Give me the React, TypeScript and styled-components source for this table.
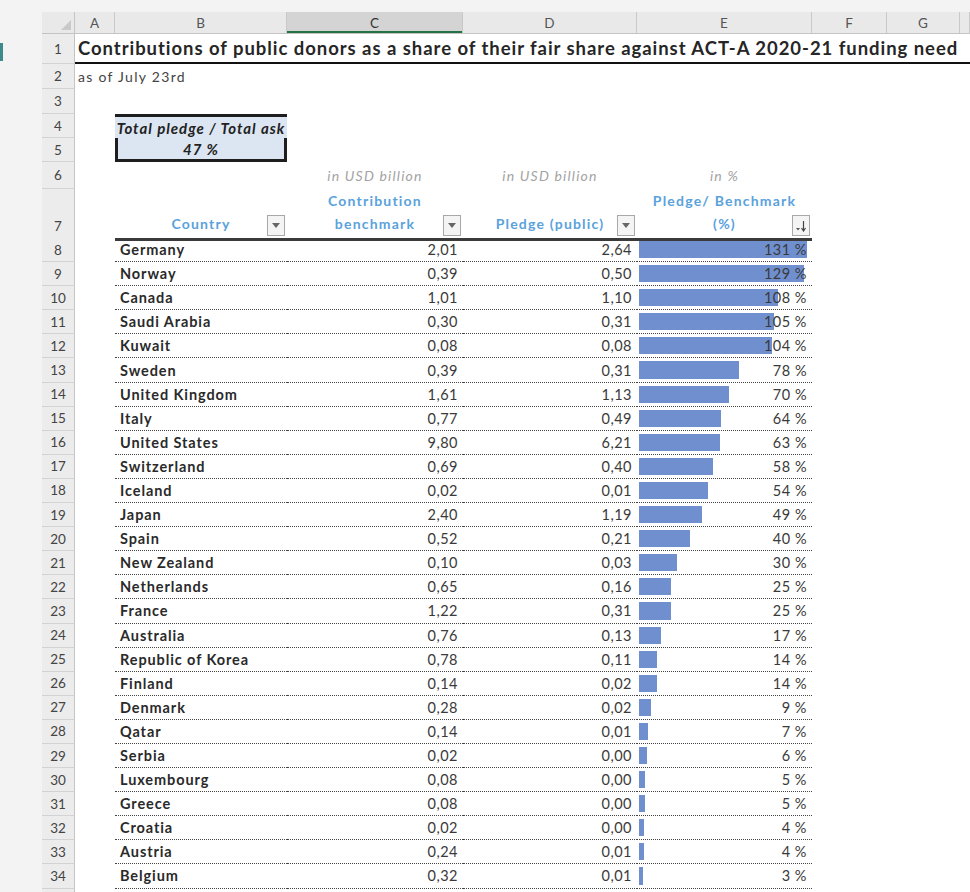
import React from "react";
import styled, { createGlobalStyle } from "styled-components";

const GlobalStyle = createGlobalStyle`
  html, body {
    margin: 0;
    padding: 0;
    background: #f3f3f3;
    overflow: hidden;
  }
  body {
    font-family: Lato, "Liberation Sans", sans-serif;
  }
`;

const COLS = "33px 40px 172px 176px 174px 175px 75px 73px 1fr";

const Window = styled.div`
  display: flex;
  width: 970px;
  height: 892px;
  overflow: hidden;
  background: #f3f3f3;
`;

const SideStrip = styled.div`
  width: 42px;
  flex-shrink: 0;
  padding-top: 43px;
`;

const SelectionMark = styled.div`
  width: 3px;
  height: 18px;
  background: #3d8b8a;
`;

const Sheet = styled.div`
  flex: 1;
  display: flex;
  flex-direction: column;
  padding-top: 12px;
`;

const ColumnBar = styled.div`
  display: grid;
  grid-template-columns: ${COLS};
  height: 21px;
  flex-shrink: 0;
  background: #e9e9e9;
  border-bottom: 1px solid #c4c4c4;
`;

const Corner = styled.div`
  position: relative;
  border-right: 1px solid #c4c4c4;
  &::after {
    content: "";
    position: absolute;
    right: 3px;
    bottom: 3px;
    border-left: 10px solid transparent;
    border-bottom: 10px solid #c9c9c9;
  }
`;

const ColLetter = styled.div<{ $active?: boolean }>`
  display: flex;
  align-items: center;
  justify-content: center;
  font-size: 13.5px;
  color: ${(p) => (p.$active ? "#333" : "#555")};
  background: ${(p) => (p.$active ? "#d4d4d4" : "transparent")};
  border-right: 1px solid #c9c9c9;
  box-shadow: ${(p) => (p.$active ? "inset 0 -2px 0 #217346" : "none")};
`;

const Row = styled.div<{ $h: number }>`
  display: grid;
  grid-template-columns: ${COLS};
  height: ${(p) => p.$h}px;
  flex-shrink: 0;
  background: #fff;
`;

const RowNum = styled.div<{ $bottom?: boolean }>`
  display: flex;
  justify-content: center;
  align-items: ${(p) => (p.$bottom ? "flex-end" : "center")};
  padding-bottom: ${(p) => (p.$bottom ? "6px" : "0")};
  background: #ececec;
  border-right: 1px solid #c4c4c4;
  border-bottom: 1px solid #d3d3d3;
  font-size: 13.5px;
  color: #444;
`;

const TitleCell = styled.div`
  grid-column: 2 / -1;
  display: flex;
  align-items: center;
  padding-left: 3px;
  border-bottom: 2px solid #111;
  font-size: 18.5px;
  letter-spacing: 0.95px;
  font-weight: 700;
  color: #262626;
  white-space: nowrap;
`;

const NoteCell = styled.div`
  grid-column: 2 / -1;
  display: flex;
  align-items: center;
  padding-left: 3px;
  font-size: 14px;
  letter-spacing: 1.3px;
  color: #444;
`;

const BoxCell = styled.div<{ $top?: boolean }>`
  grid-column: 3;
  display: flex;
  align-items: center;
  justify-content: center;
  background: #dce6f2;
  font-size: 15px;
  letter-spacing: 1px;
  font-weight: 700;
  font-style: italic;
  color: #222;
  white-space: nowrap;
  border-top: ${(p) => (p.$top ? "3px solid #1e1e1e" : "none")};
  border-left: ${(p) => (p.$top ? "none" : "3px solid #1e1e1e")};
  border-right: ${(p) => (p.$top ? "none" : "3px solid #1e1e1e")};
  border-bottom: ${(p) => (p.$top ? "none" : "3px solid #1e1e1e")};
`;

const UnitLabel = styled.div<{ $col: number }>`
  grid-column: ${(p) => p.$col};
  display: flex;
  align-items: center;
  justify-content: center;
  font-size: 14px;
  letter-spacing: 1.2px;
  font-style: italic;
  color: #a3a3a3;
`;

const HeadCell = styled.div<{ $col: number }>`
  grid-column: ${(p) => p.$col};
  position: relative;
  display: flex;
  align-items: flex-end;
  justify-content: center;
  padding-bottom: 3px;
  border-bottom: 3px solid #3a3a3a;
  font-size: 14px;
  letter-spacing: 1.2px;
  font-weight: 700;
  line-height: 23px;
  color: #5aa2dc;
  text-align: center;
`;

const FilterButton = styled.span`
  position: absolute;
  right: 2px;
  bottom: 2px;
  width: 18px;
  height: 21px;
  box-sizing: border-box;
  border: 1px solid #a8a8a8;
  background: #f4f4f4;
  display: flex;
  align-items: center;
  justify-content: center;
`;

const NameCell = styled.div`
  grid-column: 3;
  display: flex;
  align-items: center;
  padding-left: 5px;
  border-bottom: 1px dotted #444;
  font-size: 14.5px;
  letter-spacing: 0.9px;
  font-weight: 700;
  color: #2a2a2a;
  white-space: nowrap;
`;

const NumCell = styled.div<{ $col: number }>`
  grid-column: ${(p) => p.$col};
  position: relative;
  display: flex;
  align-items: center;
  justify-content: flex-end;
  padding-right: 5px;
  border-bottom: 1px dotted #444;
  font-size: 14.5px;
  letter-spacing: 0.5px;
  color: #3a3a3a;
`;

const Bar = styled.div`
  position: absolute;
  left: 2px;
  top: 3px;
  bottom: 3px;
  background: #6f8fcf;
`;

const PctText = styled.span`
  position: relative;
`;

type Donor = [string, string, string, number];

const donors: Donor[] = [
  ["Germany", "2,01", "2,64", 131],
  ["Norway", "0,39", "0,50", 129],
  ["Canada", "1,01", "1,10", 108],
  ["Saudi Arabia", "0,30", "0,31", 105],
  ["Kuwait", "0,08", "0,08", 104],
  ["Sweden", "0,39", "0,31", 78],
  ["United Kingdom", "1,61", "1,13", 70],
  ["Italy", "0,77", "0,49", 64],
  ["United States", "9,80", "6,21", 63],
  ["Switzerland", "0,69", "0,40", 58],
  ["Iceland", "0,02", "0,01", 54],
  ["Japan", "2,40", "1,19", 49],
  ["Spain", "0,52", "0,21", 40],
  ["New Zealand", "0,10", "0,03", 30],
  ["Netherlands", "0,65", "0,16", 25],
  ["France", "1,22", "0,31", 25],
  ["Australia", "0,76", "0,13", 17],
  ["Republic of Korea", "0,78", "0,11", 14],
  ["Finland", "0,14", "0,02", 14],
  ["Denmark", "0,28", "0,02", 9],
  ["Qatar", "0,14", "0,01", 7],
  ["Serbia", "0,02", "0,00", 6],
  ["Luxembourg", "0,08", "0,00", 5],
  ["Greece", "0,08", "0,00", 5],
  ["Croatia", "0,02", "0,00", 4],
  ["Austria", "0,24", "0,01", 4],
  ["Belgium", "0,32", "0,01", 3],
  ["", "", "", 2],
];

const DropIcon = () => (
  <svg width="8" height="5" viewBox="0 0 8 5">
    <path d="M0 0 L8 0 L4 5 Z" fill="#666" />
  </svg>
);

const SortIcon = () => (
  <svg width="12" height="12" viewBox="0 0 12 12">
    <path d="M1 8 L5 8 L3 10.5 Z" fill="#555" />
    <path d="M8.5 1 V10" stroke="#444" strokeWidth="1.2" />
    <path d="M6.5 8 L8.5 11 L10.5 8" stroke="#444" strokeWidth="1.2" fill="none" />
  </svg>
);

export default function App() {
  const letters = ["A", "B", "C", "D", "E", "F", "G", ""];
  return (
    <Window>
      <GlobalStyle />
      <SideStrip>
        <SelectionMark />
      </SideStrip>
      <Sheet>
        <ColumnBar>
          <Corner />
          {letters.map((l, i) => (
            <ColLetter key={i} $active={l === "C"}>
              {l}
            </ColLetter>
          ))}
        </ColumnBar>

        <Row $h={30}>
          <RowNum>1</RowNum>
          <TitleCell>
            Contributions of public donors as a share of their fair share against ACT-A 2020-21 funding need
          </TitleCell>
        </Row>
        <Row $h={25}>
          <RowNum>2</RowNum>
          <NoteCell>as of July 23rd</NoteCell>
        </Row>
        <Row $h={25}>
          <RowNum>3</RowNum>
        </Row>
        <Row $h={24}>
          <RowNum>4</RowNum>
          <BoxCell $top>Total pledge / Total ask</BoxCell>
        </Row>
        <Row $h={24}>
          <RowNum>5</RowNum>
          <BoxCell>47 %</BoxCell>
        </Row>
        <Row $h={27}>
          <RowNum>6</RowNum>
          <UnitLabel $col={4}>in USD billion</UnitLabel>
          <UnitLabel $col={5}>in USD billion</UnitLabel>
          <UnitLabel $col={6}>in %</UnitLabel>
        </Row>
        <Row $h={49}>
          <RowNum $bottom>7</RowNum>
          <HeadCell $col={3}>
            Country
            <FilterButton>
              <DropIcon />
            </FilterButton>
          </HeadCell>
          <HeadCell $col={4}>
            Contribution
            <br />
            benchmark
            <FilterButton>
              <DropIcon />
            </FilterButton>
          </HeadCell>
          <HeadCell $col={5}>
            Pledge (public)
            <FilterButton>
              <DropIcon />
            </FilterButton>
          </HeadCell>
          <HeadCell $col={6}>
            Pledge/ Benchmark
            <br />
            (%)
            <FilterButton>
              <SortIcon />
            </FilterButton>
          </HeadCell>
        </Row>

        {donors.map(([name, bench, pledge, pct], i) => (
          <Row $h={24.1} key={i}>
            <RowNum>{i + 8}</RowNum>
            <NameCell>{name}</NameCell>
            <NumCell $col={4}>{bench}</NumCell>
            <NumCell $col={5}>{pledge}</NumCell>
            <NumCell $col={6}>
              <Bar style={{ width: `${(pct / 131) * 168}px` }} />
              <PctText>{name ? `${pct} %` : ""}</PctText>
            </NumCell>
          </Row>
        ))}
      </Sheet>
    </Window>
  );
}
